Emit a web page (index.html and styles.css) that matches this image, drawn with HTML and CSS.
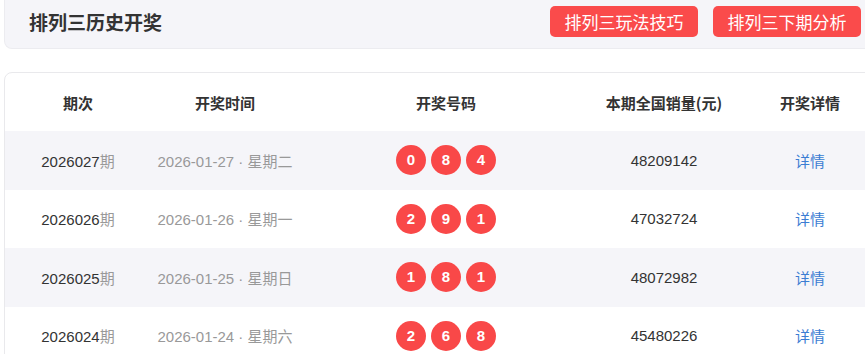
FILE: index.html
```html
<!DOCTYPE html>
<html lang="zh-CN">
<head>
<meta charset="utf-8">
<title>排列三历史开奖</title>
<link rel="stylesheet" href="styles.css">
</head>
<body>
<div class="page">
  <div class="top-card">
    <h1 class="title">排列三历史开奖</h1>
    <div class="actions">
      <a class="btn">排列三玩法技巧</a>
      <a class="btn">排列三下期分析</a>
    </div>
  </div>
  <div class="table-card">
    <div class="row head">
      <div class="c1">期次</div>
      <div class="c2">开奖时间</div>
      <div class="c3">开奖号码</div>
      <div class="c4">本期全国销量(元)</div>
      <div class="c5">开奖详情</div>
    </div>
    <div class="row alt">
      <div class="c1"><span class="num">2026027</span><span class="gray">期</span></div>
      <div class="c2 gray">2026-01-27 · 星期二</div>
      <div class="c3"><span class="ball">0</span><span class="ball">8</span><span class="ball">4</span></div>
      <div class="c4">48209142</div>
      <div class="c5"><a class="link">详情</a></div>
    </div>
    <div class="row">
      <div class="c1"><span class="num">2026026</span><span class="gray">期</span></div>
      <div class="c2 gray">2026-01-26 · 星期一</div>
      <div class="c3"><span class="ball">2</span><span class="ball">9</span><span class="ball">1</span></div>
      <div class="c4">47032724</div>
      <div class="c5"><a class="link">详情</a></div>
    </div>
    <div class="row alt">
      <div class="c1"><span class="num">2026025</span><span class="gray">期</span></div>
      <div class="c2 gray">2026-01-25 · 星期日</div>
      <div class="c3"><span class="ball">1</span><span class="ball">8</span><span class="ball">1</span></div>
      <div class="c4">48072982</div>
      <div class="c5"><a class="link">详情</a></div>
    </div>
    <div class="row">
      <div class="c1"><span class="num">2026024</span><span class="gray">期</span></div>
      <div class="c2 gray">2026-01-24 · 星期六</div>
      <div class="c3"><span class="ball">2</span><span class="ball">6</span><span class="ball">8</span></div>
      <div class="c4">45480226</div>
      <div class="c5"><a class="link">详情</a></div>
    </div>
  </div>
</div>
</body>
</html>
```
FILE: styles.css
```css
html, body {
  margin: 0;
  padding: 0;
  background: #fff;
  overflow: hidden;
}
body {
  font-family: "Liberation Sans", "Noto Sans CJK SC", Arial, sans-serif;
  color: #333;
}
.page {
  width: 884px;
  padding-left: 4px;
}
.top-card {
  height: 48px;
  background: #f5f5f9;
  border: 1px solid #ececf0;
  border-top: none;
  border-radius: 0 0 8px 8px;
  display: flex;
  align-items: center;
  justify-content: space-between;
  padding: 0 0 0 24px;
  box-sizing: content-box;
}
.title {
  margin: 0;
  font-size: 19px;
  font-weight: bold;
  color: #333;
  font-family: "Noto Sans CJK SC", sans-serif;
  line-height: 1;
  margin-top: -5px;
}
.actions {
  display: flex;
  gap: 15px;
  margin-top: -6px;
  margin-right: 26px;
}
.btn {
  display: block;
  width: 148px;
  height: 31px;
  line-height: 31px;
  text-align: center;
  background: #fa4b4b;
  color: #fff;
  font-size: 17px;
  border-radius: 5px;
  font-family: "Noto Sans CJK SC", sans-serif;
}
.table-card {
  margin-top: 23px;
  border: 1px solid #e9e9ec;
  border-radius: 8px;
  overflow: hidden;
  width: 880px;
}
.row {
  display: grid;
  grid-template-columns: 146px 148px 294px 142px 150px;
  height: 58.5px;
  align-items: center;
  font-size: 15px;
}
.row > div {
  text-align: center;
}
.row.head {
  height: 58px;
  font-weight: bold;
  color: #333;
  font-family: "Noto Sans CJK SC", sans-serif;
}
.row.alt {
  background: #f5f5f9;
}
.num {
  color: #333;
}
.gray {
  color: #999;
}
.c3 {
  display: flex;
  justify-content: center;
  gap: 5px;
}
.ball {
  width: 30px;
  height: 30px;
  line-height: 30px;
  border-radius: 50%;
  background: #f94848;
  color: #fff;
  font-weight: bold;
  font-size: 15px;
  text-align: center;
}
.c4 {
  color: #333;
}
.link {
  color: #3b7dd3;
}
```
